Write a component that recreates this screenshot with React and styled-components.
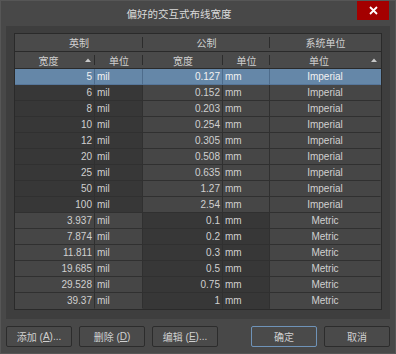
import React from 'react';
import styled, { createGlobalStyle } from 'styled-components';

const Global = createGlobalStyle`
  html, body { margin: 0; padding: 0; background: #484848; }
  body { font-family: "Liberation Sans", "Noto Sans CJK SC", sans-serif; }
  * { box-sizing: border-box; }
`;

const Dialog = styled.div`
  width: 396px;
  height: 354px;
  background: #484848;
  border: 1px solid #565656;
  display: flex;
  flex-direction: column;
  color: #d2d2d2;
`;

const TitleBar = styled.div`
  height: 25px;
  display: flex;
  align-items: flex-start;
  padding-right: 6px;
`;

const Title = styled.div`
  flex: 1;
  text-align: center;
  font-family: "Noto Sans CJK SC", sans-serif;
  font-size: 10.5px;
  line-height: 26px;
  color: #dadada;
`;

const CloseButton = styled.div`
  width: 32px;
  height: 19px;
  background: #a40000;
  display: flex;
  align-items: center;
  justify-content: center;
`;

const Panel = styled.div`
  margin: 0 5px;
  padding: 7px 8px 9px;
  background: #3e3e3e;
`;

const Table = styled.div`
  display: grid;
  grid-template-columns: 80px 48px 80px 47px 111px;
  border: 1px solid #2a2a2a;
  background: #3a3a3a;
`;

const HeadCell = styled.div`
  grid-column: span ${p => p.$span || 1};
  height: ${p => p.$h}px;
  background: #4a4a4a;
  border-bottom: 1px solid #2a2a2a;
  position: relative;
  display: flex;
  align-items: center;
  font-family: "Noto Sans CJK SC", sans-serif;
  font-size: 10px;
  color: #cfcfcf;
  &::after {
    content: '';
    display: ${p => (p.$last ? 'none' : 'block')};
    position: absolute;
    right: 0;
    top: 3px;
    bottom: 3px;
    width: 1px;
    background: #2c2c2c;
  }
`;

const HeadLabel = styled.span`
  flex: 1;
  text-align: center;
`;

const SortBox = styled.span`
  width: 12px;
  display: flex;
  justify-content: center;
  align-items: center;
  margin-right: 1px;
`;

const Cell = styled.div`
  height: 16px;
  border-bottom: 1px solid ${p => (p.$lastRow ? 'transparent' : p.$sel ? '#56769a' : '#303030')};
  border-right: 1px solid ${p => (p.$lastCol ? 'transparent' : p.$sel ? '#4e6c8c' : '#303030')};
  background: ${p => (p.$sel ? '#6587a8' : p.$dark ? '#373737' : '#464646')};
  color: ${p => (p.$sel ? '#f2f2f2' : '#d0d0d0')};
  font-size: 10px;
  line-height: 15px;
  text-align: ${p => p.$align || 'left'};
  padding: 0 ${p => (p.$align === 'right' ? '2px' : '2px')};
  white-space: nowrap;
  overflow: hidden;
`;

const Footer = styled.div`
  display: flex;
  gap: 7px;
  margin: 7px 5px 0;
`;

const Button = styled.div`
  width: 66px;
  height: 21px;
  background: #4a4a4a;
  border: 1px solid ${p => (p.$primary ? '#6f93b8' : '#2c2c2c')};
  border-radius: 2px;
  color: #d0d0d0;
  font-size: 10px;
  display: flex;
  align-items: center;
  justify-content: center;
  margin-left: ${p => (p.$push ? 'auto' : '0')};
  margin-right: ${p => (p.$gapRight ? '1px' : '0')};
`;

const Key = styled.span`
  text-decoration: underline;
  text-underline-offset: 1px;
`;

const SortArrow = () => (
  <svg width="6" height="4" viewBox="0 0 6 4">
    <path d="M0 4 L3 0.5 L6 4 Z" fill="#c8c8c8" />
  </svg>
);

const imperial = [
  ['5', '0.127'],
  ['6', '0.152'],
  ['8', '0.203'],
  ['10', '0.254'],
  ['12', '0.305'],
  ['20', '0.508'],
  ['25', '0.635'],
  ['50', '1.27'],
  ['100', '2.54'],
];
const metric = [
  ['3.937', '0.1'],
  ['7.874', '0.2'],
  ['11.811', '0.3'],
  ['19.685', '0.5'],
  ['29.528', '0.75'],
  ['39.37', '1'],
];

const rows = [
  ...imperial.map(([a, b]) => ({ mil: a, mm: b, sys: 'Imperial' })),
  ...metric.map(([a, b]) => ({ mil: a, mm: b, sys: 'Metric' })),
];

export default function App() {
  return (
    <>
      <Global />
      <Dialog>
        <TitleBar>
          <Title>偏好的交互式布线宽度</Title>
          <CloseButton>
            <svg width="9" height="9" viewBox="0 0 9 9">
              <path d="M1 1 L8 8 M8 1 L1 8" stroke="#ffffff" strokeWidth="1.8" />
            </svg>
          </CloseButton>
        </TitleBar>
        <Panel>
          <Table>
            <HeadCell $span={2} $h={18}><HeadLabel>英制</HeadLabel></HeadCell>
            <HeadCell $span={2} $h={18}><HeadLabel>公制</HeadLabel></HeadCell>
            <HeadCell $h={18} $last><HeadLabel>系统单位</HeadLabel></HeadCell>

            <HeadCell $h={17}><HeadLabel>宽度</HeadLabel><SortBox><SortArrow /></SortBox></HeadCell>
            <HeadCell $h={17}><HeadLabel>单位</HeadLabel></HeadCell>
            <HeadCell $h={17}><HeadLabel>宽度</HeadLabel></HeadCell>
            <HeadCell $h={17}><HeadLabel>单位</HeadLabel></HeadCell>
            <HeadCell $h={17} $last><HeadLabel>单位</HeadLabel><SortBox><SortArrow /></SortBox></HeadCell>

            {rows.map((r, i) => {
              const sel = i === 0;
              const imp = r.sys === 'Imperial';
              const last = i === rows.length - 1;
              return (
                <React.Fragment key={i}>
                  <Cell $sel={sel} $dark={imp} $lastRow={last} $align="right">{r.mil}</Cell>
                  <Cell $sel={sel} $dark={imp} $lastRow={last}>mil</Cell>
                  <Cell $sel={sel} $dark={!imp} $lastRow={last} $align="right">{r.mm}</Cell>
                  <Cell $sel={sel} $dark={!imp} $lastRow={last}>mm</Cell>
                  <Cell $sel={sel} $lastRow={last} $lastCol $align="center">{r.sys}</Cell>
                </React.Fragment>
              );
            })}
          </Table>
        </Panel>
        <Footer>
          <Button>添加 (<Key>A</Key>)...</Button>
          <Button>删除 (<Key>D</Key>)</Button>
          <Button>编辑 (<Key>E</Key>)...</Button>
          <Button $push $primary>确定</Button>
          <Button>取消</Button>
        </Footer>
      </Dialog>
    </>
  );
}
